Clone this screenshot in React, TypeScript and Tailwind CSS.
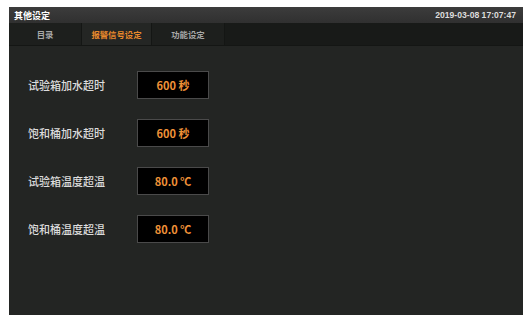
const rows = [
  { label: '试验箱加水超时', value: '600 秒' },
  { label: '饱和桶加水超时', value: '600 秒' },
  { label: '试验箱温度超温', value: '80.0 ℃' },
  { label: '饱和桶温度超温', value: '80.0 ℃' },
];

const tabs = ['目录', '报警信号设定', '功能设定'];

export default function App() {
  return (
    <div className="w-[528px] h-[319px] bg-white pl-[9px] pt-[7px]" style={{ fontFamily: '"Noto Sans CJK SC", "Noto Sans", sans-serif' }}>
      <div className="w-[514px] h-[308px] bg-[#232523] flex flex-col">
        {/* title bar */}
        <div className="h-[16px] bg-gradient-to-b from-[#3c3c3c] to-[#303030] flex items-center justify-between px-[5px]">
          <span className="text-[9px] font-bold text-white leading-none">其他设定</span>
          <span className="text-[8.6px] font-bold text-[#dddddd] leading-none pr-[2px]" style={{ fontFamily: '"Liberation Sans", sans-serif' }}>
            2019-03-08 17:07:47
          </span>
        </div>
        {/* tabs */}
        <div className="h-[23px] bg-[#181a18] flex border-b border-[#141614]">
          {tabs.map((t, i) => (
            <div
              key={t}
              className={
                i === 1
                  ? 'w-[71px] flex items-center justify-center bg-[#242624] text-[#e8892c] text-[8.4px] font-bold border-x border-[#141614]'
                  : 'w-[72px] flex items-center justify-center bg-[#1d1f1d] text-[#a8a8a8] text-[8.4px] font-bold'
              }
            >
              {t}
            </div>
          ))}
          <div className="flex-1 border-l border-[#141614]" />
        </div>
        {/* content */}
        <div className="flex flex-col gap-[20px] pt-[25px] pl-[19px]">
          {rows.map((r) => (
            <div key={r.label} className="flex items-center h-[28px]">
              <span className="w-[109px] text-[11px] font-medium text-[#dcdcdc]">{r.label}</span>
              <div className="w-[72px] h-[28px] bg-black border border-[#4a4a4a] flex items-center justify-center text-[11px] font-semibold text-[#f09238]">
                {r.value}
              </div>
            </div>
          ))}
        </div>
      </div>
    </div>
  );
}
